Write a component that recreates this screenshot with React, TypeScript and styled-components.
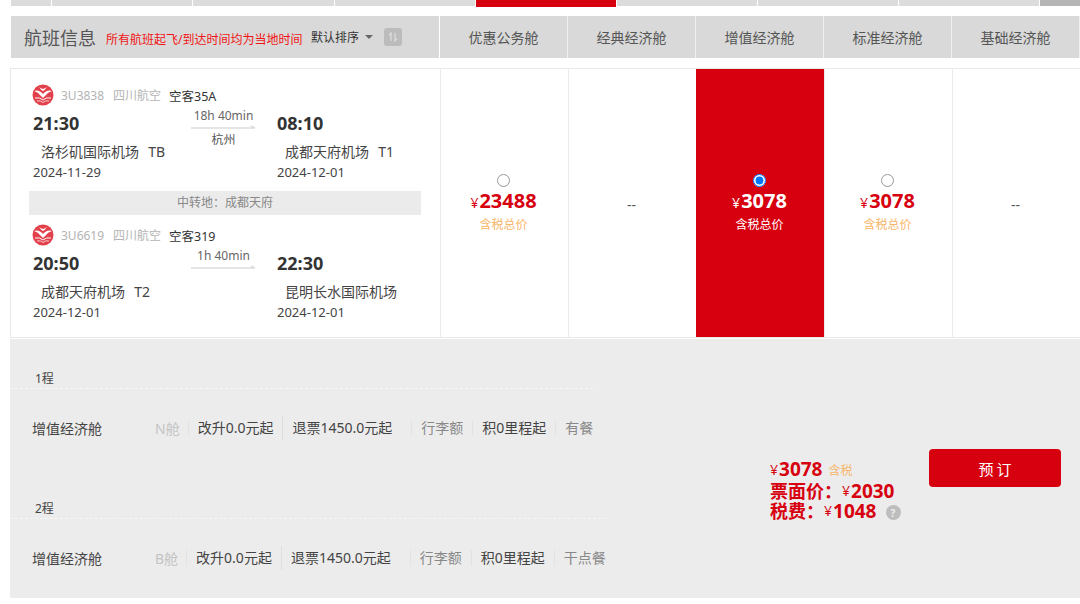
import styled, { createGlobalStyle } from 'styled-components';

const RED = '#d7000f';

const GlobalStyle = createGlobalStyle`
	html, body {
		margin: 0;
		padding: 0;
		background: #fff;
		overflow: hidden;
	}
	body {
		font-family: 'Noto Sans', 'Noto Sans CJK SC', sans-serif;
		color: #333;
	}
`;

const tabs = [40, 140, 141, 140, 140, 140, 140, 140, 40];
const cabins = ['优惠公务舱', '经典经济舱', '增值经济舱', '标准经济舱', '基础经济舱'];

const legs = [
	{
		no: '3U3838',
		plane: '空客35A',
		depTime: '21:30',
		depPort: '洛杉矶国际机场',
		depTerm: 'TB',
		depDate: '2024-11-29',
		duration: '18h 40min',
		stop: '杭州',
		arrTime: '08:10',
		arrPort: '成都天府机场',
		arrTerm: 'T1',
		arrDate: '2024-12-01',
	},
	{
		no: '3U6619',
		plane: '空客319',
		depTime: '20:50',
		depPort: '成都天府机场',
		depTerm: 'T2',
		depDate: '2024-12-01',
		duration: '1h 40min',
		stop: '',
		arrTime: '22:30',
		arrPort: '昆明长水国际机场',
		arrTerm: '',
		arrDate: '2024-12-01',
	},
];

const fares = [
	{ price: '23488' },
	null,
	{ price: '3078', active: true },
	{ price: '3078' },
	null,
];

const trips = [
	{ name: '1程', code: 'N舱', meal: '有餐' },
	{ name: '2程', code: 'B舱', meal: '干点餐' },
];

const Logo = () => (
	<svg width="22" height="22" viewBox="0 0 22 22" fill="none">
		<circle cx="11" cy="11" r="10.5" fill="#e2404a" />
		<path d="M2 7Q7 5 11 10 15 5 20 7 16 8 13 12L11 14 9 12Q6 8 2 7Z" fill="#fff" />
		<path d="M7 3Q9 6 11 7 13 6 15 3 13 4.500 11 5 9 4.500 7 3Z" fill="#fff" />
		<path d="M3 14Q8 13 11 16 14 13 19 14" stroke="#fff" strokeWidth="1" />
		<path d="M5 17Q8.500 16 11 18.500 13.500 16 17 17" stroke="#fff" strokeWidth="0.9" opacity="0.8" />
	</svg>
);

const SortIcon = () => (
	<svg width="10" height="10" viewBox="0 0 10 10" fill="none" stroke="#dedede" strokeWidth="1.2">
		<path d="M3 9V1L1 3.500" />
		<path d="M7 1V9L9 6.500" />
	</svg>
);

const Arrow = () => (
	<svg width="65" height="6" viewBox="0 0 65 6" fill="none">
		<path d="M0 3H64M60 1L64 3" stroke="#ddd" strokeWidth="1.500" />
	</svg>
);

const Page = styled.div`
	width: 1080px;
	height: 604px;
	padding-left: 10px;
	box-sizing: border-box;
	overflow: hidden;
`;

const TabStrip = styled.div`
	display: flex;
	align-items: flex-start;
	gap: 1px;
	margin-left: 1px;
	height: 6px;
`;

const Tab = styled.div<{ $active?: boolean; $end?: boolean }>`
	flex: none;
	height: ${(p) => (p.$active ? '7px' : '6px')};
	background: ${(p) => (p.$active ? RED : p.$end ? '#b5b5b5' : '#dcdcdc')};
`;

const HeaderRow = styled.div`
	display: grid;
	grid-template-columns: 429px repeat(5, 128px);
	height: 42px;
	margin: 10px 0 10px 1px;
`;

const HeaderInfo = styled.div`
	display: flex;
	align-items: center;
	padding-left: 13px;
	background: #d9d9d9;
	margin-right: 1px;
`;

const HeaderTitle = styled.span`
	font-size: 18px;
	color: #555;
	width: 82px;
	flex: none;
`;

const HeaderNote = styled.span`
	font-size: 12px;
	color: #f01414;
	margin-top: 3px;
	width: 205px;
	flex: none;
	white-space: nowrap;
`;

const SortLabel = styled.span`
	font-size: 12px;
	color: #333;
	width: 54px;
	flex: none;
`;

const Caret = styled.span`
	width: 0;
	height: 0;
	border-left: 4px solid transparent;
	border-right: 4px solid transparent;
	border-top: 4px solid #666;
	margin-right: 11px;
`;

const SortButton = styled.span`
	width: 18px;
	height: 18px;
	border-radius: 3px;
	background: #bcbcbc;
	display: flex;
	align-items: center;
	justify-content: center;
`;

const CabinHead = styled.div`
	display: flex;
	align-items: center;
	justify-content: center;
	background: #d9d9d9;
	border-right: 1px solid #f0f0f0;
	font-size: 14px;
	color: #555;
`;

const Card = styled.div`
	display: grid;
	grid-template-columns: 429px repeat(5, 128px);
	height: 270px;
	box-sizing: border-box;
	border: 1px solid #e8e8e8;
	border-right: none;
`;

const FlightCol = styled.div`
	padding: 15px 19px 0 18px;
`;

const Leg = styled.div`
	padding-left: 4px;
`;

const LegMeta = styled.div`
	display: flex;
	align-items: center;
	height: 22px;
	white-space: nowrap;
`;

const LogoBox = styled.span`
	display: flex;
	width: 29px;
	flex: none;
	margin-left: -1px;
`;

const FlightNo = styled.span`
	font-size: 12px;
	color: #b4b4b4;
	width: 52px;
	flex: none;
`;

const Airline = styled.span`
	font-size: 12px;
	color: #b4b4b4;
	width: 56px;
	flex: none;
`;

const Plane = styled.span`
	font-size: 12.500px;
	color: #333;
`;

const Route = styled.div`
	display: grid;
	grid-template-columns: 158px 65px 1fr;
	margin-top: 5px;
`;

const Stop = styled.div<{ $arrive?: boolean }>`
	display: flex;
	flex-direction: column;
	padding-left: ${(p) => (p.$arrive ? '21px' : '0')};
`;

const Time = styled.div`
	font-size: 18px;
	font-weight: 700;
	line-height: 24px;
	color: #333;
`;

const Port = styled.div`
	font-size: 14px;
	line-height: 20px;
	margin-top: 7px;
	padding-left: 8px;
	color: #444;
	white-space: pre;
	word-spacing: 1px;
`;

const DateText = styled.div`
	font-size: 13px;
	line-height: 18px;
	margin-top: 1px;
	color: #444;
`;

const Transit = styled.div`
	display: flex;
	flex-direction: column;
	align-items: center;
	margin-top: -4px;
	font-size: 12px;
	color: #666;
	white-space: nowrap;
`;

const TransitLine = styled.div`
	height: 6px;
	display: flex;
	line-height: 0;
`;

const DurationText = styled.span`
	line-height: 18px;
`;

const StopText = styled.span`
	line-height: 18px;
	color: #555;
`;

const TransferBar = styled.div`
	height: 24px;
	margin: 10px 0 9px;
	background: #ebebeb;
	color: #888;
	font-size: 12px;
	line-height: 24px;
	text-align: center;
`;

const FareCol = styled.div<{ $active?: boolean }>`
	display: flex;
	flex-direction: column;
	align-items: center;
	justify-content: center;
	padding: 2px 2px 0 0;
	border-left: 1px solid ${(p) => (p.$active ? RED : '#ebebeb')};
	background: ${(p) => (p.$active ? RED : '#fff')};
	color: ${(p) => (p.$active ? '#fff' : RED)};
`;

const Radio = styled.input`
	margin: 0;
	width: 13px;
	height: 13px;

	&:not(:checked) {
		opacity: 0.75;
	}
`;

const Price = styled.div`
	font-size: 20px;
	font-weight: 700;
	line-height: 28px;
`;

const Yen = styled.span`
	font-size: 14px;
	font-weight: 400;
	margin-right: 1px;
`;

const FareNote = styled.div<{ $active?: boolean }>`
	font-size: 12px;
	line-height: 18px;
	margin-top: -1px;
	color: ${(p) => (p.$active ? '#fff' : '#f8b66a')};
`;

const Empty = styled.div`
	font-size: 14px;
	color: #555;
`;

const Panel = styled.div`
	display: flex;
	margin-top: 1px;
	height: 259px;
	background: #ececec;
`;

const Trips = styled.div`
	width: 600px;
	flex: none;
	padding-top: 30px;
`;

const Trip = styled.div`
	width: fit-content;
	height: 130px;
`;

const TripName = styled.div`
	font-size: 12px;
	line-height: 19px;
	color: #444;
	padding-left: 25px;
	border-bottom: 1px dashed #f6f6f6;
`;

const TripRow = styled.div`
	display: flex;
	align-items: center;
	height: 78px;
	padding-left: 22px;
	font-size: 14px;
	white-space: nowrap;
`;

const CabinName = styled.span`
	width: 123px;
	flex: none;
	color: #444;
`;

const Code = styled.span`
	color: #c4c4c4;
	padding-right: 8px;
`;

const Term = styled.span<{ $muted?: boolean; $wide?: boolean; $strong?: boolean; $last?: boolean }>`
	color: ${(p) => (p.$muted ? '#888' : '#444')};
	padding: 0 ${(p) => (p.$last ? '0' : p.$wide ? '19px' : '9px')} 0 9px;
	border-left: 1px solid ${(p) => (p.$strong ? '#dedede' : '#e2e2e2')};
	line-height: ${(p) => (p.$strong ? '24px' : '16px')};
`;

const Summary = styled.div`
	display: flex;
	align-items: flex-start;
	margin-left: 160px;
	padding-top: 110px;
`;

const Totals = styled.div`
	width: 159px;
	flex: none;
	color: ${RED};
	padding-top: 8px;
`;

const TotalLine = styled.div<{ $first?: boolean }>`
	display: flex;
	align-items: center;
	font-size: 18px;
	font-weight: 700;
	line-height: ${(p) => (p.$first ? '21px' : '20px')};
	white-space: nowrap;
`;

const Amount = styled.span`
	font-size: 19px;
`;

const TotalTax = styled.span`
	font-size: 12px;
	font-weight: 400;
	color: #f8b66a;
	margin: 3px 0 0 6px;
`;

const Help = styled.span`
	display: inline-flex;
	align-items: center;
	justify-content: center;
	width: 15px;
	height: 15px;
	border-radius: 50%;
	background: #bdbdbd;
	color: #eee;
	font-size: 10px;
	margin: 3px 0 0 9px;
`;

const BookButton = styled.button`
	width: 132px;
	height: 38px;
	border: none;
	border-radius: 4px;
	background: ${RED};
	color: #fff;
	font-family: inherit;
	font-size: 15px;
	letter-spacing: 3px;
	text-indent: 3px;
`;

export default function App() {
	return (
		<>
			<GlobalStyle />
			<Page>
				<TabStrip>
					{tabs.map((w, i) => (
						<Tab key={i} style={{ width: w }} $active={i === 4} $end={i === tabs.length - 1} />
					))}
				</TabStrip>

				<HeaderRow>
					<HeaderInfo>
						<HeaderTitle>航班信息</HeaderTitle>
						<HeaderNote>所有航班起飞/到达时间均为当地时间</HeaderNote>
						<SortLabel>默认排序</SortLabel>
						<Caret />
						<SortButton>
							<SortIcon />
						</SortButton>
					</HeaderInfo>
					{cabins.map((c) => (
						<CabinHead key={c}>{c}</CabinHead>
					))}
				</HeaderRow>

				<Card>
					<FlightCol>
						{legs.map((leg, i) => (
							<div key={leg.no}>
								{i === 1 && <TransferBar>中转地：成都天府</TransferBar>}
								<Leg>
									<LegMeta>
										<LogoBox>
											<Logo />
										</LogoBox>
										<FlightNo>{leg.no}</FlightNo>
										<Airline>四川航空</Airline>
										<Plane>{leg.plane}</Plane>
									</LegMeta>
									<Route>
										<Stop>
											<Time>{leg.depTime}</Time>
											<Port>
												{leg.depPort}  {leg.depTerm}
											</Port>
											<DateText>{leg.depDate}</DateText>
										</Stop>
										<Transit>
											<DurationText>{leg.duration}</DurationText>
											<TransitLine>
												<Arrow />
											</TransitLine>
											<StopText>{leg.stop}</StopText>
										</Transit>
										<Stop $arrive>
											<Time>{leg.arrTime}</Time>
											<Port>
												{leg.arrPort}  {leg.arrTerm}
											</Port>
											<DateText>{leg.arrDate}</DateText>
										</Stop>
									</Route>
								</Leg>
							</div>
						))}
					</FlightCol>
					{fares.map((fare, i) =>
						fare ? (
							<FareCol key={i} $active={fare.active}>
								<Radio type="radio" name="fare" defaultChecked={fare.active} />
								<Price>
									<Yen>¥</Yen>
									{fare.price}
								</Price>
								<FareNote $active={fare.active}>含税总价</FareNote>
							</FareCol>
						) : (
							<FareCol key={i}>
								<Empty>--</Empty>
							</FareCol>
						),
					)}
				</Card>

				<Panel>
					<Trips>
						{trips.map((t) => (
							<Trip key={t.name}>
								<TripName>{t.name}</TripName>
								<TripRow>
									<CabinName>增值经济舱</CabinName>
									<Code>{t.code}</Code>
									<Term>改升0.0元起</Term>
									<Term $wide $strong>退票1450.0元起</Term>
									<Term $muted>行李额</Term>
									<Term>积0里程起</Term>
									<Term $muted $last>{t.meal}</Term>
								</TripRow>
							</Trip>
						))}
					</Trips>
					<Summary>
						<Totals>
							<TotalLine $first>
								<Yen>¥</Yen>
								<Amount>3078</Amount>
								<TotalTax>含税</TotalTax>
							</TotalLine>
							<TotalLine>
								票面价：<Yen>¥</Yen>
								<Amount>2030</Amount>
							</TotalLine>
							<TotalLine>
								税费：<Yen>¥</Yen>
								<Amount>1048</Amount>
								<Help>?</Help>
							</TotalLine>
						</Totals>
						<BookButton>预订</BookButton>
					</Summary>
				</Panel>
			</Page>
		</>
	);
}
